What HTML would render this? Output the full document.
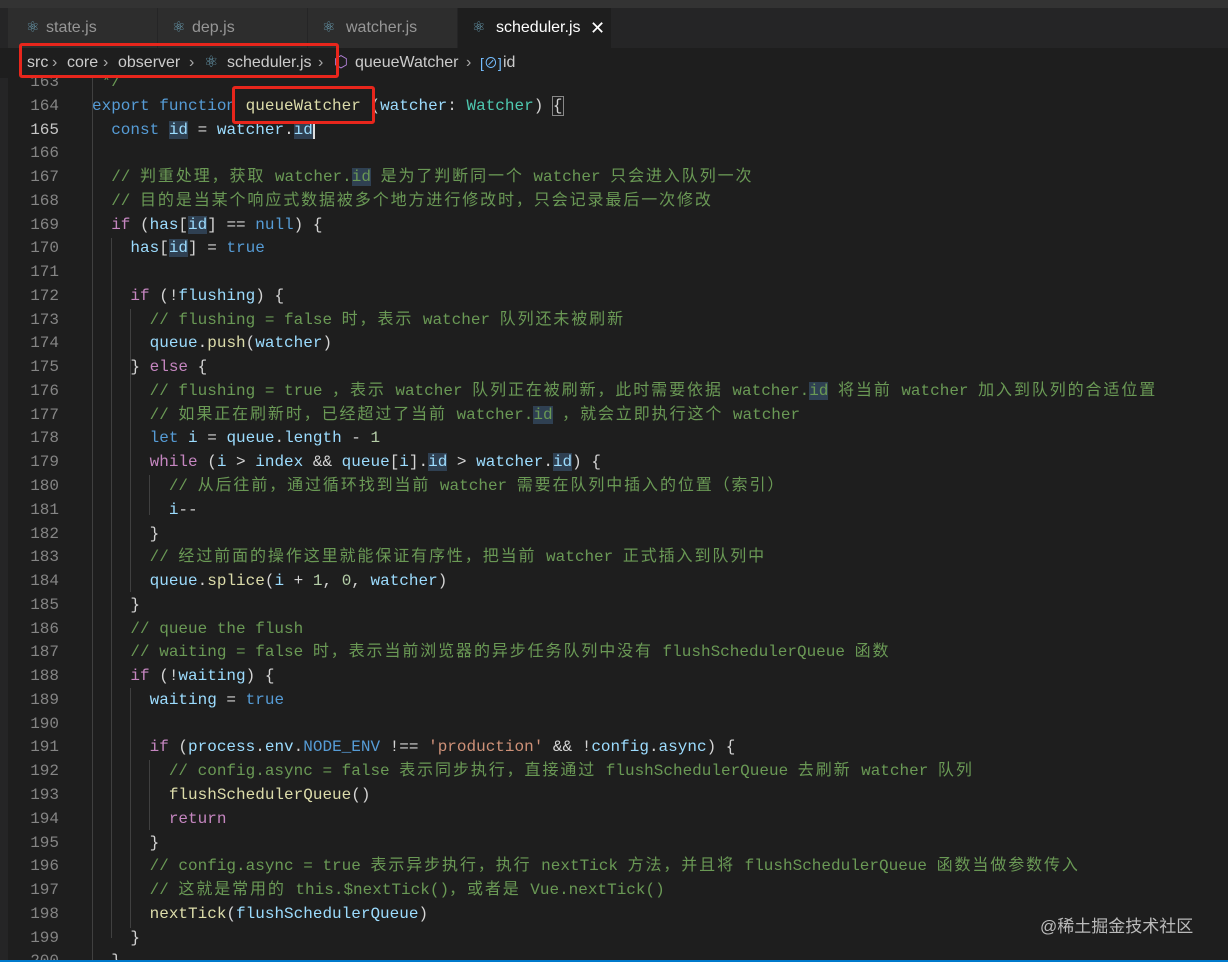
<!DOCTYPE html>
<html><head><meta charset="utf-8"><style>
*{margin:0;padding:0;box-sizing:border-box}
body{width:1228px;height:962px;background:#1e1e1e;overflow:hidden;position:relative;font-family:"Liberation Sans","Noto Sans CJK SC",sans-serif}
#top{position:absolute;left:0;top:0;width:1228px;height:8px;background:#333}
#tabs{position:absolute;left:0;top:8px;width:1228px;height:40px;background:#252526}
.tab{position:absolute;top:0;height:40px;width:150px;background:#2d2d2d;color:#969696;font-size:16px;line-height:40px;border-right:1px solid #252526}
.tab.act{background:#1e1e1e;color:#fff}
.tab i{position:absolute;top:0;font-style:normal;color:#6a9fb5;font-size:15px}
.tab span.t2{position:absolute;top:0}
#bc{position:absolute;left:0;top:48px;width:1228px;height:30px;background:#1e1e1e;color:#cccccc;font-size:16px;line-height:30px;white-space:nowrap}
#bc span{position:absolute;top:0}
#bc .g{color:#aaa}
#left{position:absolute;left:0;top:78px;width:8px;height:884px;background:#252526}
#code{position:absolute;left:0;top:78px;width:1228px;height:882px;overflow:hidden}
#inner{position:absolute;left:0;top:-7px}
.l{height:23.77px;line-height:23.77px;white-space:pre;font-family:"Liberation Mono","Noto Sans CJK SC",monospace;font-size:16px;color:#d4d4d4;position:relative}
.l b{font-weight:normal;display:inline-block;width:59px;text-align:right;color:#858585;margin-right:33px}
.l.cur b{color:#c6c6c6}
.k{color:#569cd6}.c{color:#c586c0}.v{color:#9cdcfe}.f{color:#dcdcaa}.t{color:#4ec9b0}.s{color:#ce9178}.n{color:#b5cea8}.m{color:#6a9955}
.h{background:#2f4052}
u{text-decoration:none;letter-spacing:1.9px}
.g1{position:absolute;top:78px;width:1px;background:#404040}
.box{position:absolute;border:3px solid #e8261c;border-radius:3px}
#status{position:absolute;left:0;top:960px;width:1228px;height:2px;background:#007acc}
#wm{position:absolute;left:1040px;top:912px;color:#bbb;font-size:17px;font-family:"Liberation Sans","Noto Sans CJK SC",sans-serif}
</style></head><body>
<div id="top"></div>
<div id="tabs">
<div class="tab" style="left:8px"><i style="left:18px">⚛</i><span class="t2" style="left:38px">state.js</span></div>
<div class="tab" style="left:158px"><i style="left:14px">⚛</i><span class="t2" style="left:34px">dep.js</span></div>
<div class="tab" style="left:308px"><i style="left:14px">⚛</i><span class="t2" style="left:38px">watcher.js</span></div>
<div class="tab act" style="left:458px;width:154px"><i style="left:14px">⚛</i><span class="t2" style="left:38px">scheduler.js</span><span class="t2" style="left:132px;color:#fff;font-size:18px">✕</span></div>
</div>
<div id="bc">
<span style="left:27px">src</span><span class="g" style="left:52px">›</span>
<span style="left:67px">core</span><span class="g" style="left:103px">›</span>
<span style="left:118px">observer</span><span class="g" style="left:189px">›</span>
<span style="left:204px;color:#6a9fb5">⚛</span><span style="left:227px">scheduler.js</span><span class="g" style="left:318px">›</span>
<span style="left:334px;color:#b180d7">⬡</span><span style="left:355px">queueWatcher</span><span class="g" style="left:466px">›</span>
<span style="left:480px;color:#75beff;font-size:14px">[⊘]</span><span style="left:503px">id</span>
</div>
<div id="left"></div>
<div class="g1" style="left:92px;height:882px"></div>
<div class="g1" style="left:111px;top:238px;height:700px"></div>
<div class="g1" style="left:130px;top:309px;height:83px"></div>
<div class="g1" style="left:130px;top:380px;height:212px"></div>
<div class="g1" style="left:149px;top:475px;height:40px"></div>
<div class="g1" style="left:130px;top:688px;height:240px"></div>
<div class="g1" style="left:149px;top:760px;height:70px"></div>
<div id="code"><div id="inner">
<div class="l"><b>163</b><span class="m"> */</span></div>
<div class="l"><b>164</b><span class="k">export</span> <span class="k">function</span> <span class="f">queueWatcher</span> (<span class="v">watcher</span>: <span class="t">Watcher</span>) <span style="outline:1px solid #888">{</span></div>
<div class="l cur"><b>165</b>  <span class="k">const</span> <span class="v h">id</span> = <span class="v">watcher</span>.<span class="v h">id</span><span style="border-left:2px solid #ddd"></span></div>
<div class="l"><b>166</b></div>
<div class="l"><b>167</b>  <span class="m">// <u>判重处理，获取</u> watcher.<span class="h">id</span> <u>是为了判断同一个</u> watcher <u>只会进入队列一次</u></span></div>
<div class="l"><b>168</b>  <span class="m">// <u>目的是当某个响应式数据被多个地方进行修改时，只会记录最后一次修改</u></span></div>
<div class="l"><b>169</b>  <span class="c">if</span> (<span class="v">has</span>[<span class="v h">id</span>] == <span class="k">null</span>) {</div>
<div class="l"><b>170</b>    <span class="v">has</span>[<span class="v h">id</span>] = <span class="k">true</span></div>
<div class="l"><b>171</b></div>
<div class="l"><b>172</b>    <span class="c">if</span> (!<span class="v">flushing</span>) {</div>
<div class="l"><b>173</b>      <span class="m">// flushing = false <u>时，表示</u> watcher <u>队列还未被刷新</u></span></div>
<div class="l"><b>174</b>      <span class="v">queue</span>.<span class="f">push</span>(<span class="v">watcher</span>)</div>
<div class="l"><b>175</b>    } <span class="c">else</span> {</div>
<div class="l"><b>176</b>      <span class="m">// flushing = true <u>，表示</u> watcher <u>队列正在被刷新，此时需要依据</u> watcher.<span class="h">id</span> <u>将当前</u> watcher <u>加入到队列的合适位置</u></span></div>
<div class="l"><b>177</b>      <span class="m">// <u>如果正在刷新时，已经超过了当前</u> watcher.<span class="h">id</span> <u>，就会立即执行这个</u> watcher</span></div>
<div class="l"><b>178</b>      <span class="k">let</span> <span class="v">i</span> = <span class="v">queue</span>.<span class="v">length</span> - <span class="n">1</span></div>
<div class="l"><b>179</b>      <span class="c">while</span> (<span class="v">i</span> &gt; <span class="v">index</span> &amp;&amp; <span class="v">queue</span>[<span class="v">i</span>].<span class="v h">id</span> &gt; <span class="v">watcher</span>.<span class="v h">id</span>) {</div>
<div class="l"><b>180</b>        <span class="m">// <u>从后往前，通过循环找到当前</u> watcher <u>需要在队列中插入的位置（索引）</u></span></div>
<div class="l"><b>181</b>        <span class="v">i</span>--</div>
<div class="l"><b>182</b>      }</div>
<div class="l"><b>183</b>      <span class="m">// <u>经过前面的操作这里就能保证有序性，把当前</u> watcher <u>正式插入到队列中</u></span></div>
<div class="l"><b>184</b>      <span class="v">queue</span>.<span class="f">splice</span>(<span class="v">i</span> + <span class="n">1</span>, <span class="n">0</span>, <span class="v">watcher</span>)</div>
<div class="l"><b>185</b>    }</div>
<div class="l"><b>186</b>    <span class="m">// queue the flush</span></div>
<div class="l"><b>187</b>    <span class="m">// waiting = false <u>时，表示当前浏览器的异步任务队列中没有</u> flushSchedulerQueue <u>函数</u></span></div>
<div class="l"><b>188</b>    <span class="c">if</span> (!<span class="v">waiting</span>) {</div>
<div class="l"><b>189</b>      <span class="v">waiting</span> = <span class="k">true</span></div>
<div class="l"><b>190</b></div>
<div class="l"><b>191</b>      <span class="c">if</span> (<span class="v">process</span>.<span class="v">env</span>.<span class="k">NODE_ENV</span> !== <span class="s">'production'</span> &amp;&amp; !<span class="v">config</span>.<span class="v">async</span>) {</div>
<div class="l"><b>192</b>        <span class="m">// config.async = false <u>表示同步执行，直接通过</u> flushSchedulerQueue <u>去刷新</u> watcher <u>队列</u></span></div>
<div class="l"><b>193</b>        <span class="f">flushSchedulerQueue</span>()</div>
<div class="l"><b>194</b>        <span class="c">return</span></div>
<div class="l"><b>195</b>      }</div>
<div class="l"><b>196</b>      <span class="m">// config.async = true <u>表示异步执行，执行</u> nextTick <u>方法，并且将</u> flushSchedulerQueue <u>函数当做参数传入</u></span></div>
<div class="l"><b>197</b>      <span class="m">// <u>这就是常用的</u> this.$nextTick()<u>，或者是</u> Vue.nextTick()</span></div>
<div class="l"><b>198</b>      <span class="f">nextTick</span>(<span class="v">flushSchedulerQueue</span>)</div>
<div class="l"><b>199</b>    }</div>
<div class="l"><b>200</b>  }</div>
</div></div>
<div class="box" style="left:19px;top:43px;width:320px;height:35px"></div>
<div class="box" style="left:232px;top:86px;width:143px;height:38px"></div>
<div id="wm">@稀土掘金技术社区</div>
<div id="status"></div>
</body></html>
